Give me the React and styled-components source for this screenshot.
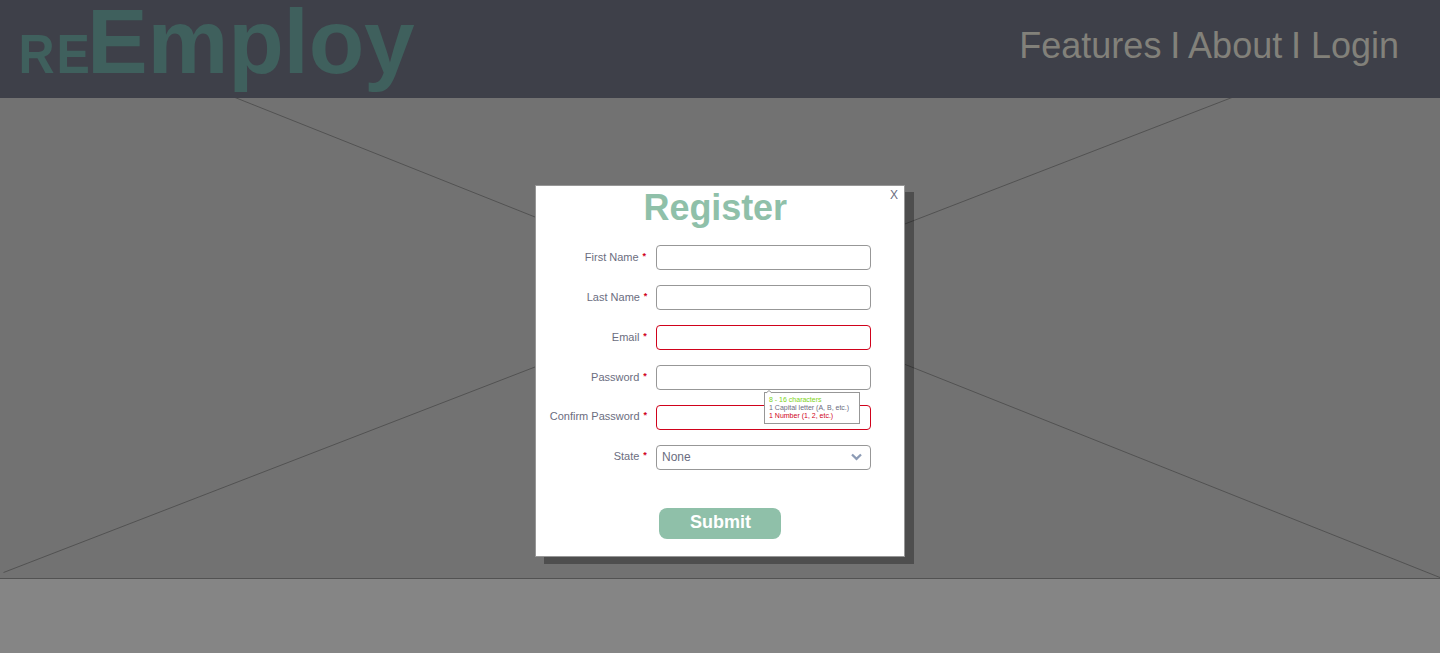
import React from "react";
import styled, { createGlobalStyle } from "styled-components";

const GlobalStyle = createGlobalStyle`
  * { box-sizing: border-box; }
  html, body { margin: 0; padding: 0; overflow: hidden; }
  body { font-family: "Liberation Sans", Helvetica, Arial, sans-serif; color: #6b6d80; }
`;

const Page = styled.div`
  position: relative;
  display: flex;
  flex-direction: column;
  height: 653px;
  background: #858585;
`;

const Header = styled.header`
  display: flex;
  justify-content: space-between;
  height: 98px;
  padding: 0 41px 0 17px;
  background: #3e4049;
`;

const Logo = styled.div`
  display: flex;
  align-items: baseline;
  height: 98px;
  color: #3f605d;
  font-weight: bold;
  line-height: 84px;
  white-space: nowrap;
`;

const LogoPrefix = styled.span`
  font-size: 50px;
  width: 70px;
  padding-left: 1.5px;
  letter-spacing: 1.8px;
  transform: scaleY(1.1);
  transform-origin: 0 59px;
`;

const LogoName = styled.span`
  font-size: 91px;
  line-height: 84px;
  letter-spacing: -0.2px;
`;

const Nav = styled.nav`
  font-size: 36px;
  line-height: 92px;
  color: #82817a;
  white-space: pre;
  transform: scaleY(1.045);
  transform-origin: 0 58px;
`;

const NavLink = styled.a`
  color: inherit;
`;

const Separator = styled.span`
  display: inline-block;
  width: 8.7px;
  font-size: 27px;
  font-weight: bold;
  line-height: 1;
  transform: translateY(-6px);
`;

const Hero = styled.main`
  height: 481px;
  background: #727272;
  border-bottom: 1px solid #525252;
  svg { display: block; }
`;

const Overlay = styled.div`
  position: absolute;
  inset: 0;
  display: flex;
  justify-content: center;
  padding-top: 185px;
`;

const Modal = styled.form`
  position: relative;
  display: flex;
  flex-direction: column;
  width: 370px;
  height: 372px;
  background: #fff;
  border: 1px solid #979797;
  box-shadow: 9px 7px 0 rgba(0, 0, 0, 0.31);
`;

const Title = styled.h1`
  margin: 0 0 0 107px;
  height: 59px;
  padding: 1px 0 0 0.6px;
  font-size: 36px;
  line-height: 41px;
  letter-spacing: -0.1px;
  color: #8fc0a9;
  transform: scaleY(1.03);
  transform-origin: 0 34px;
`;

const Close = styled.button`
  position: absolute;
  top: 2px;
  right: 6px;
  padding: 0;
  border: 0;
  background: none;
  color: #6b6d80;
  font: 12px/14px "Liberation Sans", sans-serif;
  transform: scaleY(1.06);
`;

const Fields = styled.div`
  display: flex;
  flex-direction: column;
  gap: 15px;
`;

const Row = styled.div`
  position: relative;
  display: flex;
  height: 25px;
`;

const Label = styled.label`
  width: 120px;
  padding-right: ${(p) => p.$end}px;
  text-align: right;
  font-size: 11px;
  line-height: ${(p) => (p.$raised ? 23 : 25)}px;
  white-space: pre;
  transform: scaleY(1.04);
`;

const Star = styled.span`
  display: inline-block;
  width: 4.3px;
  color: #d0021b;
  font-size: 9px;
  font-weight: bold;
  line-height: 1;
  transform: translateY(-2px);
`;

const Control = styled.div`
  display: flex;
  align-items: center;
  justify-content: space-between;
  width: 215px;
  height: 25px;
  padding: 0 8px 0 5px;
  border: 1px solid ${(p) => (p.$error ? "#d0021b" : "#979797")};
  border-radius: 4px;
  background: #fff;
  font-size: 12px;
  svg { margin-bottom: 1px; }
`;

const Value = styled.span`
  padding-bottom: 1px;
  transform: scaleY(1.06);
`;

const Tooltip = styled.div`
  position: absolute;
  z-index: 2;
  top: 27px;
  left: 228px;
  width: 96px;
  height: 32px;
  padding: 3px 0 0 4px;
  border: 1px solid #979797;
  background: #fff;
  font-size: 7px;
  line-height: 8px;
  white-space: nowrap;
`;

const Caret = styled.svg`
  position: absolute;
  top: -3px;
  left: 0;
`;

const Hint = styled.div`
  color: ${(p) => p.$color};
`;

const Submit = styled.button`
  width: 122px;
  height: 31px;
  margin: 38px 0 0 123px;
  padding: 0 0 2px 1px;
  border: 0;
  border-radius: 8px;
  background: #8fc0a9;
  color: #fff;
  font: bold 18px/29px "Liberation Sans", sans-serif;
`;

const fields = [
  { label: "First Name", end: 10 },
  { label: "Last Name", end: 8.7 },
  { label: "Email", end: 9.3, error: true },
  { label: "Password", end: 9.3, hints: true },
  { label: "Confirm Password", end: 9, error: true, raised: true },
  { label: "State", end: 9.3, raised: true, value: "None" },
];

function PasswordHints() {
  return (
    <Tooltip>
      <Caret width="8" height="4" viewBox="0 0 8 4">
        <path d="M1 3.2 L4 0.6 L7 3.2 V4 H1 Z" fill="#fff" />
        <path d="M1 3 L4 0.6 L7 3" fill="none" stroke="#979797" />
      </Caret>
      <Hint $color="#7ed321">8 - 16 characters</Hint>
      <Hint $color="#6b6d80">1 Capital letter (A, B, etc.)</Hint>
      <Hint $color="#d0021b">1 Number (1, 2, etc.)</Hint>
    </Tooltip>
  );
}

export default function App() {
  return (
    <Page>
      <GlobalStyle />
      <Header>
        <Logo>
          <LogoPrefix>RE</LogoPrefix>
          <LogoName>Employ</LogoName>
        </Logo>
        <Nav>
          <NavLink>Features</NavLink> <Separator>|</Separator> <NavLink>About</NavLink>{" "}
          <Separator>|</Separator> <NavLink>Login</NavLink>
        </Nav>
      </Header>
      <Hero>
        <svg width="1440" height="480" viewBox="0 0 1440 480" stroke="#525252">
          <path d="M235 -0.5 L1440 479.5 M1232 -0.5 L3.5 474.5" />
        </svg>
      </Hero>
      <Overlay>
        <Modal>
          <Title>Register</Title>
          <Close type="button">X</Close>
          <Fields>
            {fields.map((f) => (
              <Row key={f.label}>
                <Label $end={f.end} $raised={f.raised}>
                  {f.label} <Star>*</Star>
                </Label>
                <Control $error={f.error}>
                  {f.value && <Value>{f.value}</Value>}
                  {f.value && (
                    <svg width="11" height="8" viewBox="0 0 11 8">
                      <path d="M1 1.5 L5.5 5.8 L10 1.5" fill="none" stroke="#8c9bb5" strokeWidth="2.3" />
                    </svg>
                  )}
                </Control>
                {f.hints && <PasswordHints />}
              </Row>
            ))}
          </Fields>
          <Submit type="button">Submit</Submit>
        </Modal>
      </Overlay>
    </Page>
  );
}
